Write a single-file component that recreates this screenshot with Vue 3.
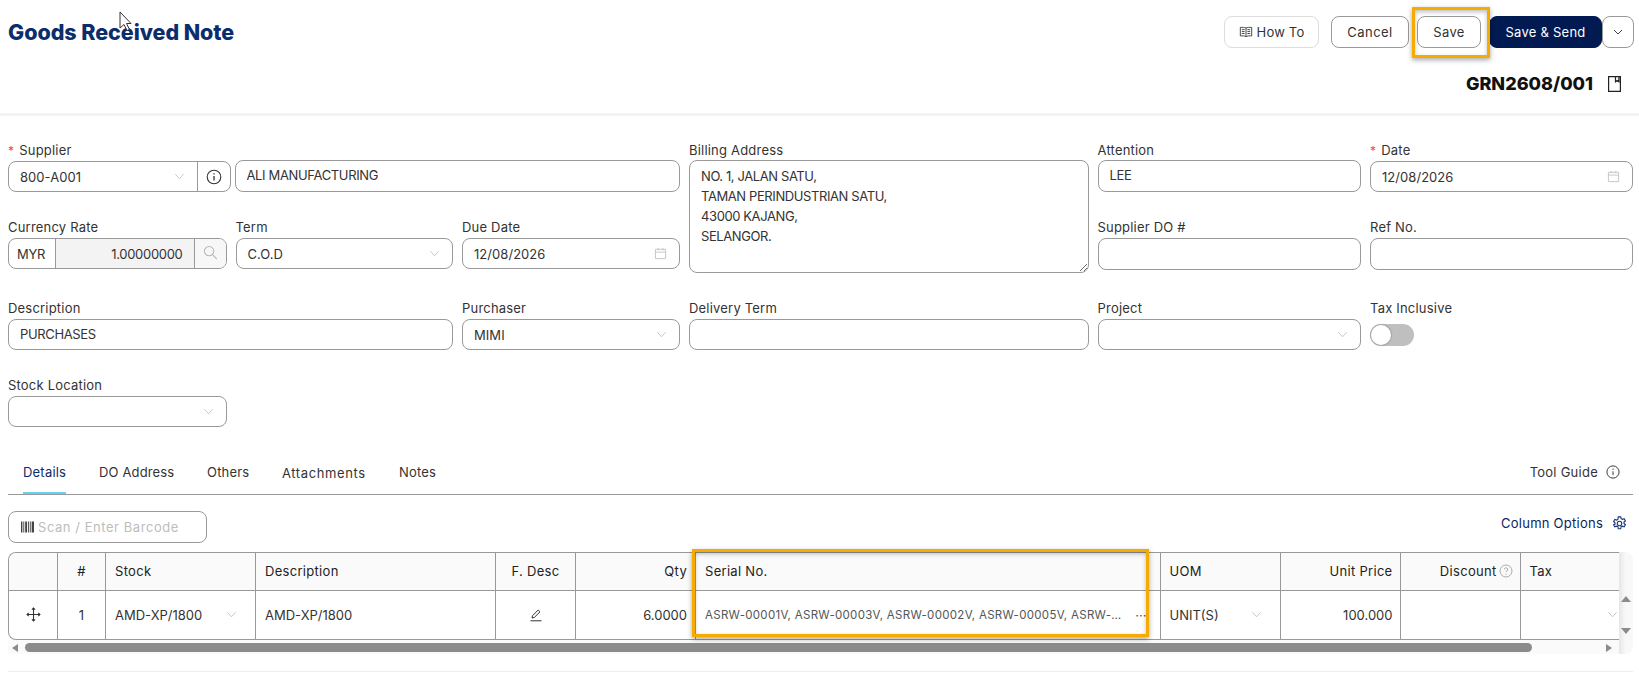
<script setup>
const tabs = ['Details', 'DO Address', 'Others', 'Attachments', 'Notes']
const address = 'NO. 1, JALAN SATU,\nTAMAN PERINDUSTRIAN SATU,\n43000 KAJANG,\nSELANGOR.'
const serial = 'ASRW-00001V, ASRW-00003V, ASRW-00002V, ASRW-00005V, ASRW-…'
</script>

<template>
  <div class="page">
    <header class="head">
      <div class="head-top">
        <h1 class="title">Goods Received Note</h1>
        <div class="actions">
          <button class="btn btn-howto">
            <svg class="ic-book" viewBox="0 0 16 16" fill="none" stroke="#444" stroke-width="1.1"><path d="M8 3.500C6.500 2.700 4 2.500 1.500 2.800v9.700c2.500-.3 5 0 6.500.8 1.500-.8 4-1.100 6.500-.8V2.800C12 2.500 9.500 2.700 8 3.500zM8 3.500v9.800M3.200 5.300h3.200M3.200 7.500h3.200M3.200 9.700h3.200M9.600 5.300h3.200M9.600 7.500h3.200M9.600 9.700h3.200"/></svg>
            How To
          </button>
          <button class="btn btn-cancel">Cancel</button>
          <span class="highlight-wrap">
            <button class="btn btn-save">Save</button>
            <span class="mark mark-save"></span>
          </span>
          <button class="btn btn-send">Save &amp; Send</button>
          <button class="btn btn-more">
            <svg class="chev-dark" viewBox="0 0 12 12" fill="none" stroke="#444" stroke-width="1"><path d="M2 4l4 4 4-4"/></svg>
          </button>
        </div>
      </div>
      <div class="doc-row">
        <span class="doc-no">GRN2608/001</span>
        <svg class="ic-doc" viewBox="0 0 13 16" fill="none" stroke="#222" stroke-width="1.200"><path d="M.6.6h11.800v14.800H.6zM7.500.6v5.200l1.700-1.300 1.700 1.300V.6" /></svg>
      </div>
      <svg class="cursor" viewBox="0 0 14 22"><path d="M1 1v16l4-3.500 3 6 2.500-1-3-6H12z" fill="#fff" stroke="#333" stroke-width="1"/></svg>
    </header>

    <section class="form">
      <div class="field f-supplier">
        <label class="lbl"><i class="req">*</i>Supplier</label>
        <div class="group group-tall">
          <div class="cell cell-grow">
            <span class="val">800-A001</span>
            <svg class="chev" viewBox="0 0 12 12"><path d="M1.500 3.500L6 8.500l4.500-5"/></svg>
          </div>
          <div class="cell cell-info">
            <svg class="ic-info" viewBox="0 0 16 16" fill="none" stroke="#333" stroke-width="1.100"><circle cx="8" cy="8" r="6.800"/><path d="M8 7v4.500M8 4.300v1.300" stroke-width="1.300"/></svg>
          </div>
        </div>
      </div>
      <div class="field f-name">
        <label class="lbl lbl-tight">&nbsp;</label>
        <input class="inp" readonly value="ALI MANUFACTURING" />
      </div>
      <div class="field f-billing">
        <label class="lbl lbl-tight">Billing Address</label>
        <textarea class="area" readonly :value="address"></textarea>
      </div>
      <div class="field f-attention">
        <label class="lbl lbl-tight">Attention</label>
        <input class="inp" readonly value="LEE" />
      </div>
      <div class="field f-date">
        <label class="lbl"><i class="req">*</i>Date</label>
        <div class="box box-tall">
          <span class="val">12/08/2026</span>
          <svg class="ic-cal" viewBox="0 0 14 14" fill="none" stroke="#c4c4c4" stroke-width="1"><path d="M1.500 2.500h11v10h-11zM1.500 5.500h11M4.500 1v2.500M9.500 1v2.500"/></svg>
        </div>
      </div>

      <div class="field">
        <label class="lbl">Currency Rate</label>
        <div class="group">
          <div class="cell cell-cur">MYR</div>
          <div class="cell cell-rate">1.00000000</div>
          <div class="cell cell-search">
            <svg class="ic-search" viewBox="0 0 16 16" fill="none" stroke="#b5b5b5" stroke-width="1.100"><circle cx="6.500" cy="6.500" r="5"/><path d="M10.200 10.200l4.500 4.800"/></svg>
          </div>
        </div>
      </div>
      <div class="field">
        <label class="lbl">Term</label>
        <div class="box">
          <span class="val">C.O.D</span>
          <svg class="chev" viewBox="0 0 12 12"><path d="M1.500 3.500L6 8.500l4.500-5"/></svg>
        </div>
      </div>
      <div class="field">
        <label class="lbl">Due Date</label>
        <div class="box">
          <span class="val">12/08/2026</span>
          <svg class="ic-cal" viewBox="0 0 14 14" fill="none" stroke="#c4c4c4" stroke-width="1"><path d="M1.500 2.500h11v10h-11zM1.500 5.500h11M4.500 1v2.500M9.500 1v2.500"/></svg>
        </div>
      </div>
      <div class="field f-do">
        <label class="lbl">Supplier DO #</label>
        <input class="inp" readonly />
      </div>
      <div class="field f-ref">
        <label class="lbl">Ref No.</label>
        <input class="inp" readonly />
      </div>

      <div class="field f-desc">
        <label class="lbl">Description</label>
        <input class="inp" readonly value="PURCHASES" />
      </div>
      <div class="field">
        <label class="lbl">Purchaser</label>
        <div class="box">
          <span class="val">MIMI</span>
          <svg class="chev" viewBox="0 0 12 12"><path d="M1.500 3.500L6 8.500l4.500-5"/></svg>
        </div>
      </div>
      <div class="field">
        <label class="lbl">Delivery Term</label>
        <input class="inp" readonly />
      </div>
      <div class="field">
        <label class="lbl">Project</label>
        <div class="box">
          <span></span>
          <svg class="chev" viewBox="0 0 12 12"><path d="M1.500 3.500L6 8.500l4.500-5"/></svg>
        </div>
      </div>
      <div class="field">
        <label class="lbl">Tax Inclusive</label>
        <div class="toggle"><span class="knob"></span></div>
      </div>

      <div class="field">
        <label class="lbl">Stock Location</label>
        <div class="box">
          <span></span>
          <svg class="chev" viewBox="0 0 12 12"><path d="M1.500 3.500L6 8.500l4.500-5"/></svg>
        </div>
      </div>
    </section>

    <nav class="tabs">
      <span v-for="(t, i) in tabs" :key="t" class="tab" :class="['tab-' + i, { active: i === 0 }]">{{ t }}</span>
      <span class="guide">
        Tool Guide
        <svg class="ic-guide" viewBox="0 0 16 16" fill="none" stroke="#333" stroke-width="1.100"><circle cx="8" cy="8" r="7"/><path d="M8 7.200v4.300M8 4.200v1.400"/></svg>
      </span>
    </nav>

    <div class="tools">
      <div class="scan">
        <svg class="ic-bar" viewBox="0 0 14 12" fill="#444"><path d="M0 0h1.500v12H0zM2.500 0h1v12h-1zM4.500 0h2v12h-2zM7.500 0h1v12h-1zM9.500 0h1v12h-1zM11.500 0h2.500v12h-2.500z"/></svg>
        <span>Scan / Enter Barcode</span>
      </div>
      <div class="colopt">
        Column Options
        <svg class="ic-gear" viewBox="0 0 16 16" fill="none" stroke="#1c3577" stroke-width="1.200"><path d="M6.700.9h2.600l.4 2 1.400.7 1.900-.8 1.300 2.300-1.500 1.300v1.600l1.500 1.300-1.300 2.300-1.900-.8-1.400.8-.4 2H6.700l-.4-2-1.400-.8-1.900.8-1.300-2.300L3.200 8.800V7.200L1.700 5.900 3 3.600l1.900.8 1.400-.7z"/><circle cx="8" cy="8" r="2.400"/></svg>
      </div>
    </div>

    <div class="grid-wrap">
      <div class="grid-clip">
        <div class="row row-head">
          <div class="c c0"></div>
          <div class="c c1 center">#</div>
          <div class="c c2">Stock</div>
          <div class="c c3">Description</div>
          <div class="c c4 center">F. Desc</div>
          <div class="c c5 right">Qty</div>
          <div class="c c6">Serial No.</div>
          <div class="c c7">UOM</div>
          <div class="c c8 right">Unit Price</div>
          <div class="c c9 right">Discount
            <svg class="ic-q" viewBox="0 0 14 14" fill="none" stroke="#aaa" stroke-width="1"><circle cx="7" cy="7" r="6"/><path d="M5.300 5.500a1.700 1.700 0 1 1 2.500 1.500c-.6.300-.8.600-.8 1.200M7 9.800v1"/></svg>
          </div>
          <div class="c c10">Tax</div>
        </div>
        <div class="row row-body">
          <div class="c c0 center">
            <svg class="ic-move" viewBox="0 0 14 14" fill="none" stroke="#333" stroke-width="1"><path d="M7 1v12M1 7h12M5.500 2.500L7 1l1.500 1.500M5.500 11.500L7 13l1.500-1.500M2.500 5.500L1 7l1.500 1.500M11.500 5.500L13 7l-1.500 1.500"/></svg>
          </div>
          <div class="c c1 center">1</div>
          <div class="c c2 spread">
            <span>AMD-XP/1800</span>
            <svg class="chev" viewBox="0 0 12 12"><path d="M1.500 3.500L6 8.500l4.500-5"/></svg>
          </div>
          <div class="c c3">AMD-XP/1800</div>
          <div class="c c4 center">
            <svg class="ic-pen" viewBox="0 0 14 14" fill="none" stroke="#333" stroke-width="1"><path d="M3 10l.6-2.400L9.200 2l1.800 1.800L5.400 9.400zM1.500 12.800h11"/></svg>
          </div>
          <div class="c c5 right">6.0000</div>
          <div class="c c6 serial">
            <span class="serial-text">{{ serial }}</span>
            <span class="dots">···</span>
          </div>
          <div class="c c7 spread">
            <span>UNIT(S)</span>
            <svg class="chev" viewBox="0 0 12 12"><path d="M1.500 3.500L6 8.500l4.500-5"/></svg>
          </div>
          <div class="c c8 right">100.000</div>
          <div class="c c9"></div>
          <div class="c c10 end">
            <svg class="chev" viewBox="0 0 12 12"><path d="M1.500 3.500L6 8.500l4.500-5"/></svg>
          </div>
        </div>
      </div>
      <div class="vbar">
        <i class="tri up"></i>
        <i class="tri down"></i>
      </div>
      <div class="hbar">
        <i class="tri left"></i>
        <span class="thumb"></span>
        <i class="tri rightward"></i>
      </div>
      <span class="mark mark-serial"></span>
    </div>

    <div class="foot-line"></div>
  </div>
</template>

<style>
html, body { margin: 0; background: #fff; overflow: hidden; }
</style>

<style scoped>
.page {
  position: relative;
  width: 1639px;
  height: 679px;
  overflow: hidden;
  font-family: Inter, "Liberation Sans", sans-serif;
  font-size: 13px;
  color: #333;
  background: #fff;
}

/* header */
.head { position: relative; height: 113px; border-bottom: 3px solid #f3f3f3; box-sizing: content-box; }
.head-top { display: flex; align-items: flex-start; justify-content: space-between; padding: 16px 5px 0 8px; }
.title { margin: 0; font-size: 21.500px; line-height: 33px; font-weight: 800; color: #0c2d6b; letter-spacing: -.05px; }
.actions { display: flex; align-items: center; }
.btn {
  box-sizing: border-box;
  height: 32px;
  border: 1px solid #999;
  border-radius: 8px;
  background: #fff;
  font: inherit;
  color: #333;
  padding: 0;
  display: inline-flex;
  align-items: center;
  justify-content: center;
  letter-spacing: .35px;
}
.btn-howto { width: 95px; margin-right: 12px; border-color: #ddd; gap: 4px; letter-spacing: .2px; }
.ic-book { width: 14px; height: 14px; }
.btn-cancel { width: 78px; margin-right: 8px; letter-spacing: .45px; }
.highlight-wrap { position: relative; display: inline-flex; margin-right: 8px; }
.btn-save { width: 64px; }
.btn-send { width: 113px; background: #021a52; border-color: #021a52; color: #fff; letter-spacing: .25px; }
.btn-more { width: 32px; }
.chev-dark { width: 12px; height: 12px; }
.mark {
  position: absolute;
  box-sizing: border-box;
  border: 3px solid #f6ab00;
  box-shadow: 0 2px 5px rgba(0, 0, 0, .35), inset 0 2px 4px rgba(0, 0, 0, .25);
  pointer-events: none;
}
.mark-save { left: -5px; right: -9px; top: -9px; bottom: -10px; }
.doc-row { display: flex; justify-content: flex-end; align-items: center; padding: 20px 18px 0 0; gap: 15px; }
.doc-no { font-size: 18px; line-height: 30px; font-weight: 800; color: #111; }
.ic-doc { width: 13px; height: 16px; }
.cursor { position: absolute; left: 119px; top: 11px; width: 14px; height: 22px; }

/* form */
.form {
  display: grid;
  grid-template-columns: 218.500px 217.500px 218px 399.500px 263.500px 263px;
  grid-template-rows: 52px 56px 52px 52px;
  column-gap: 9px;
  row-gap: 25px;
  padding: 24px 0 0 8px;
}
.field { display: flex; flex-direction: column; min-width: 0; }
.lbl { display: block; height: 20px; line-height: 20px; margin-bottom: 1px; font-size: 13px; white-space: nowrap; color: #333; letter-spacing: .2px; }
.lbl-tight { margin-bottom: 0; }
.req { color: #f0445a; font-style: normal; margin-right: 5px; font-size: 12px; }
.f-supplier { margin-right: -4px; }
.f-name { grid-column: span 2; margin-left: -1px; }
.f-billing { grid-column: 4; grid-row: 1 / span 2; }
.f-attention { grid-column: 5; grid-row: 1; }
.f-date { grid-column: 6; grid-row: 1; }
.f-do { grid-column: 5; grid-row: 2; }
.f-ref { grid-column: 6; grid-row: 2; }
.f-desc { grid-column: span 2; }
.inp, .box, .group, .area {
  box-sizing: border-box;
  width: 100%;
  border: 1px solid #999;
  border-radius: 8px;
  background: #fff;
  font: inherit;
  color: #333;
}
.inp { height: 31.500px; padding: 0 11px 2px; outline: none; display: block; letter-spacing: -.35px; }
.box { height: 31px; padding: 0 12px 0 11px; display: flex; align-items: center; justify-content: space-between; }
.box-tall, .group-tall { height: 32px; }
.val { letter-spacing: .05px; }
.area {
  height: 114px;
  padding: 5px 11px;
  line-height: 20px;
  letter-spacing: -.4px;
  resize: vertical;
  outline: none;
  display: block;
}
.group { display: flex; overflow: hidden; height: 31px; }
.group-tall { height: 32px; }
.cell { display: flex; align-items: center; box-sizing: border-box; height: 100%; }
.cell-grow { flex: 1; padding: 0 12px 0 11px; justify-content: space-between; border-right: 1px solid #999; }
.cell-info { width: 32px; justify-content: center; }
.ic-info { width: 16px; height: 16px; }
.cell-cur { width: 47px; padding-left: 8px; border-right: 1px solid #999; letter-spacing: -.3px; }
.cell-rate { flex: 1; background: #f3f3f3; justify-content: flex-end; padding-right: 11px; border-right: 1px solid #999; color: #333; letter-spacing: -.3px; }
.cell-search { width: 31px; background: #f7f7f7; justify-content: center; }
.ic-search { width: 15px; height: 15px; margin-top: -3px; }
.chev { width: 11px; height: 11px; fill: none; stroke: #c3c3c3; stroke-width: 1; flex: none; }
.ic-cal { width: 13px; height: 13px; }
.toggle { width: 44px; height: 22px; margin-top: 5px; border-radius: 11px; background: #bfbfbf; padding: 1px; box-sizing: border-box; }
.knob { display: block; width: 20px; height: 20px; border-radius: 50%; background: #fff; box-shadow: 0 0 1px 1px rgba(120, 120, 120, .35); }

/* tabs */
.tabs {
  display: flex;
  align-items: flex-start;
  margin: 23px 6px 0 8px;
  padding-left: 15px;
  height: 44px;
  border-bottom: 1px solid #999;
  box-sizing: content-box;
}
.tab { line-height: 20px; padding-top: 12px; height: 44px; box-sizing: border-box; color: #333; white-space: nowrap; letter-spacing: .2px; }
.tab.active { color: #0c2d6b; border-bottom: 2px solid #63d4f0; }
.tab-0 { width: 43px; margin-right: 33px; }
.tab-1 { width: 75px; margin-right: 33px; letter-spacing: .15px; }
.tab-2 { width: 43px; margin-right: 32px; }
.tab-3 { width: 85px; margin-right: 32px; padding-top: 13px; letter-spacing: .6px; }
.guide { margin-left: auto; padding: 12px 13px 0 0; line-height: 20px; display: flex; align-items: center; gap: 8px; height: 20px; letter-spacing: .25px; }
.ic-guide { width: 14px; height: 14px; }

/* tools */
.tools { display: flex; justify-content: space-between; align-items: flex-start; margin: 16px 6px 0 8px; height: 41px; }
.scan {
  width: 199px;
  height: 32px;
  box-sizing: border-box;
  border: 1px solid #999;
  border-radius: 8px;
  padding-left: 12px;
  display: flex;
  align-items: center;
  gap: 4px;
  color: #bdbdbd;
  letter-spacing: .55px;
}
.ic-bar { width: 13px; height: 12px; flex: none; }
.colopt { color: #0c1f5c; display: flex; align-items: center; gap: 9px; height: 24px; margin-right: 6px; letter-spacing: .25px; }
.ic-gear { width: 15px; height: 15px; }

/* table */
.grid-wrap {
  position: relative;
  margin: 0 6px 0 8px;
  display: grid;
  grid-template-columns: 1611px 14px;
  grid-template-rows: 88px 14px;
  border-radius: 0 8px 8px 0;
}
.grid-clip {
  overflow: hidden;
  border: 1px solid #999;
  border-right: 0;
  border-radius: 8px 0 0 8px;
  box-sizing: border-box;
}
.row { display: flex; width: 1760px; }
.row-head { height: 38px; background: #fafafa; border-bottom: 1px solid #999; box-sizing: border-box; }
.row-head .c { padding-bottom: 2px; }
.row-body { height: 48px; }
.row-body .c { padding-bottom: 1px; }
.c {
  box-sizing: border-box;
  height: 100%;
  padding: 0 9px;
  display: flex;
  align-items: center;
  border-right: 1px solid #999;
  white-space: nowrap;
  flex: none;
  color: #333;
}
.row-head .c { color: #222; letter-spacing: .3px; }
.c0 { width: 49px; }
.c1 { width: 48px; }
.c2 { width: 150px; }
.c3 { width: 240px; }
.c4 { width: 80px; }
.c5 { width: 120px; padding-right: 8px; }
.c6 { width: 464.500px; }
.c7 { width: 120px; }
.c8 { width: 120px; padding-right: 7px; }
.c9 { width: 120px; padding-right: 7px; }
.c10 { width: 120px; border-right: 0; }
.center { justify-content: center; }
.right { justify-content: flex-end; }
.spread { justify-content: space-between; padding-right: 18px; }
.end { justify-content: flex-end; padding-right: 22px; }
.c10.end { width: 99px; padding-right: 2px; }
.serial { justify-content: space-between; padding-right: 13px; }
.serial-text { font-size: 11.500px; color: #555; letter-spacing: .3px; }
.dots { color: #555; }
.ic-q { width: 14px; height: 14px; margin-left: 2px; }
.ic-move { width: 15px; height: 15px; }
.ic-pen { width: 14px; height: 14px; }

.vbar {
  grid-row: 1 / span 2;
  grid-column: 2;
  background: linear-gradient(90deg, #e6e6e6, #f8f8f8 45%);
  border-radius: 0 8px 8px 0;
  display: flex;
  flex-direction: column;
  align-items: center;
  padding-top: 44px;
  gap: 26px;
}
.hbar {
  background: #fafafa;
  display: flex;
  align-items: center;
  padding: 3px 0 2px 4px;
  box-sizing: border-box;
  height: 14px;
}
.thumb { width: 1507px; height: 9px; margin-left: 7px; border-radius: 5px; background: #8b8b8b; }
.tri { display: block; width: 0; height: 0; border-style: solid; border-color: transparent; }
.tri.up { border-width: 0 5px 6px; border-bottom-color: #8b8b8b; }
.tri.down { border-width: 6px 5px 0; border-top-color: #8b8b8b; }
.tri.left { border-width: 4.500px 6px 4.500px 0; border-right-color: #8b8b8b; }
.tri.rightward { border-width: 4.500px 0 4.500px 6px; border-left-color: #8b8b8b; margin-left: 74px; }
.mark-serial { left: 684px; top: -3px; width: 457px; height: 88px; }

.foot-line { margin: 17px 6px 0 8px; border-top: 1px solid #eee; }
</style>
